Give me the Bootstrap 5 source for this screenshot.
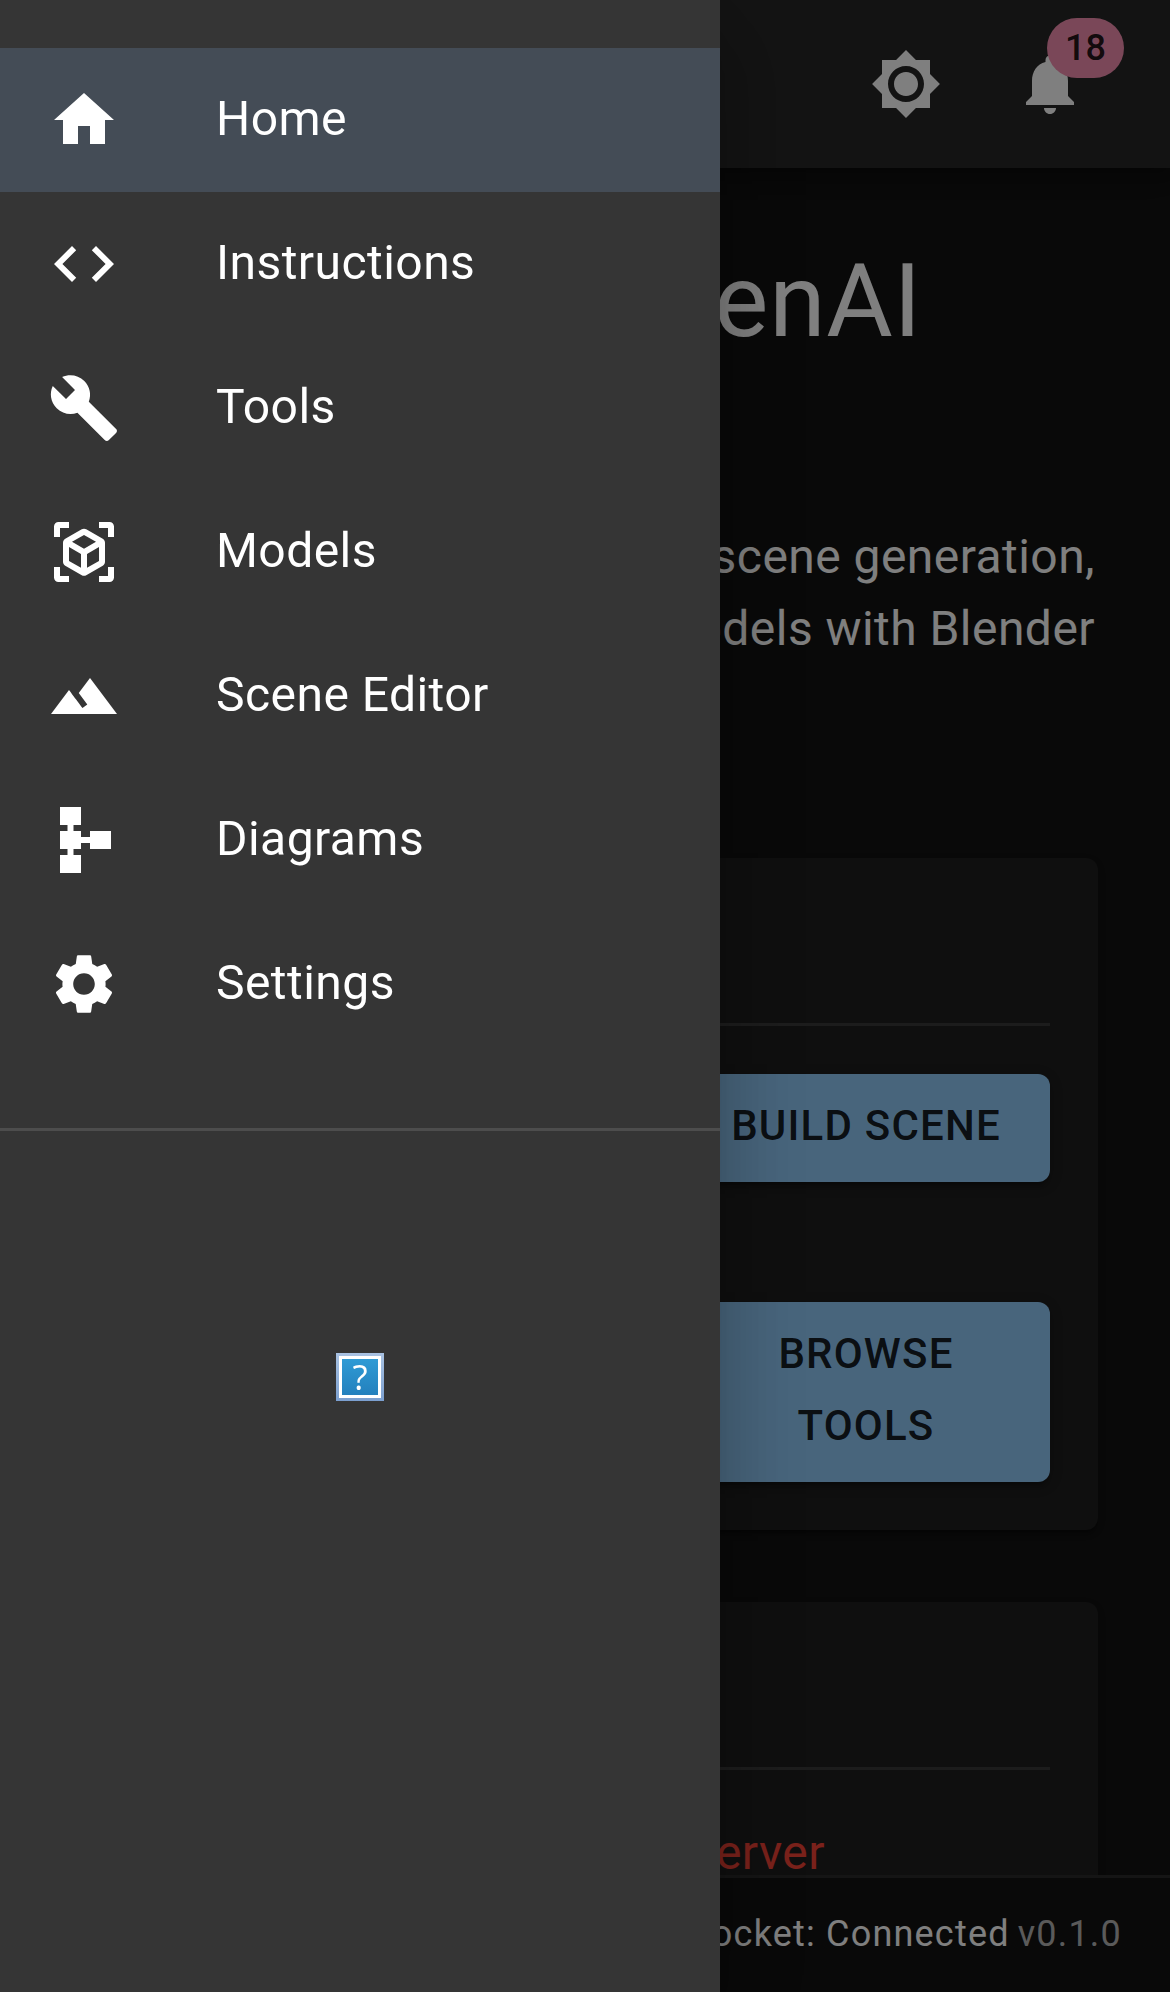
<!DOCTYPE html>
<html lang="en" data-bs-theme="dark">
<head>
<meta charset="utf-8">
<meta name="viewport" content="width=device-width, initial-scale=1">
<title>Home</title>
<link href="https://cdn.jsdelivr.net/npm/bootstrap@5.3.0/dist/css/bootstrap.min.css" rel="stylesheet">
<style>
  body { height: 1992px; background: #121212; color: #fff; font: 400 48px/72px Roboto, sans-serif; letter-spacing: .45px; }
  svg { width: 72px; height: 72px; fill: currentColor; flex: none; }
  .app-bar { height: 168px; padding: 0 48px; background: #272727;
    box-shadow: 0 6px 12px -3px rgba(0,0,0,.2), 0 12px 15px rgba(0,0,0,.14), 0 3px 30px rgba(0,0,0,.12); }
  .tool-btn { padding: 36px; line-height: 0; color: #fff; border: 0; }
  .count-pill { top: 18px; right: -2px; height: 60px; padding: 0 18px; border-radius: 30px; background: #f48fb1; color: rgba(0,0,0,.87); font: 500 36px/60px Roboto, sans-serif; letter-spacing: 0; }
  .page { padding: 70px 72px 0; }
  .page-title { font-size: 102px; line-height: 126px; letter-spacing: .75px; margin: 0 176px 157px 0; font-weight: 400; }
  .intro { margin: 0 3px 193px 0; }
  .panel { width: 100%; padding: 48px; border: 0; border-radius: 12px; background: #1e1e1e;
    box-shadow: 0 6px 3px -3px rgba(0,0,0,.2), 0 3px 3px rgba(0,0,0,.14), 0 3px 9px rgba(0,0,0,.12); }
  .panel hr { margin: 117px 0 48px; border-top: 3px solid #fff; opacity: .12; }
  .action { --bs-btn-color: rgba(0,0,0,.87); --bs-btn-bg: #90caf9; width: 368px; padding: 16px 46px 20px; border: 0; border-radius: 12px; font-size: 42px; font-weight: 500; line-height: 72px; letter-spacing: 1.2px;
    box-shadow: 0 9px 3px -6px rgba(0,0,0,.2), 0 6px 6px rgba(0,0,0,.14), 0 3px 15px rgba(0,0,0,.12); }
  .actions { gap: 120px; }
  .gap-panels { margin-top: 72px; }
  .alert-line { color: #f44336; margin: -1px 225px 0 0; }
  .status-bar { height: 117px; padding: 0 48px 2px; gap: 8px; background: #121212; border-top: 3px solid #2a2a2a; font-size: 36px; letter-spacing: 1.2px; }
  .muted { color: rgba(255,255,255,.7); }
  .offcanvas.drawer { width: 720px; padding-top: 48px; border: 0; background: #353535; color: #fff; --bs-offcanvas-width: 720px;
    box-shadow: 0 24px 30px -15px rgba(0,0,0,.2), 0 48px 72px 6px rgba(0,0,0,.14), 0 18px 90px 15px rgba(0,0,0,.12); }
  .drawer .nav-link { height: 144px; padding: 0 48px; gap: 96px; color: #fff; font-size: 48px; }
  .drawer .nav-link span { margin-top: -2px; }
  .drawer .nav-link.active { background: #444c56; }
  .drawer hr { margin: 72px 0 222px; border-top: 3px solid #4d4d4d; opacity: 1; }
  .missing { width: 48px; height: 48px; padding: 3px; background: linear-gradient(#a9c2e2, #7b9fcf); }
  .missing span { width: 42px; height: 42px; border: 3px solid #fff; background: linear-gradient(#2f9bd5, #2380bd); font: 500 35px/35px "Open Sans", sans-serif; letter-spacing: 0; }
</style>
</head>
<body class="overflow-hidden">
<header class="app-bar position-relative d-flex align-items-center justify-content-end">
  <button class="btn tool-btn" aria-label="Theme"><svg viewBox="0 0 24 24"><path d="M20 8.69V4h-4.69L12 .69 8.69 4H4v4.69L.69 12 4 15.31V20h4.69L12 23.31 15.31 20H20v-4.69L23.31 12 20 8.69zM12 18c-3.31 0-6-2.69-6-6s2.69-6 6-6 6 2.69 6 6-2.69 6-6 6zm0-10c-2.21 0-4 1.79-4 4s1.79 4 4 4 4-1.79 4-4-1.79-4-4-4z"/></svg></button>
  <button class="btn tool-btn" aria-label="Notifications"><svg viewBox="0 0 24 24"><path d="M12 22c1.1 0 2-.9 2-2h-4c0 1.1.89 2 2 2zm6-6v-5c0-3.07-1.64-5.64-4.5-6.32V4c0-.83-.67-1.5-1.5-1.5s-1.5.67-1.5 1.5v.68C7.63 5.36 6 7.92 6 11v5l-2 2v1h16v-1l-2-2z"/></svg></button>
  <span class="count-pill position-absolute me-5">18</span>
</header>

<main class="page">
  <h1 class="page-title text-end">OpenAI</h1>
  <p class="intro text-end">scene generation,<br>models with Blender</p>
  <section class="card panel">
    <hr>
    <div class="actions d-flex flex-column align-items-end">
      <button class="btn action">BUILD SCENE</button>
      <button class="btn action">BROWSE TOOLS</button>
    </div>
  </section>
  <section class="card panel gap-panels">
    <hr>
    <p class="alert-line text-end">Server</p>
  </section>
</main>

<footer class="status-bar fixed-bottom d-flex align-items-center justify-content-end">
  <span>Socket: Connected</span><span class="muted">v0.1.0</span>
</footer>

<div class="offcanvas-backdrop show"></div>
<aside class="offcanvas offcanvas-start show drawer" tabindex="-1" data-bs-backdrop="false">
  <nav class="nav flex-column">
    <a class="nav-link active d-flex align-items-center" href="#"><svg viewBox="0 0 24 24"><path d="M10 20v-6h4v6h5v-8h3L12 3 2 12h3v8z"/></svg><span>Home</span></a>
    <a class="nav-link d-flex align-items-center" href="#"><svg viewBox="0 0 24 24"><path d="M9.4 16.6 4.8 12l4.6-4.6L8 6l-6 6 6 6 1.4-1.4zm5.2 0 4.6-4.6-4.6-4.6L16 6l6 6-6 6-1.4-1.4z"/></svg><span>Instructions</span></a>
    <a class="nav-link d-flex align-items-center" href="#"><svg viewBox="0 0 24 24"><path d="m22.7 19-9.1-9.1c.9-2.3.4-5-1.5-6.9-2-2-5-2.4-7.4-1.3L9 6 6 9 1.6 4.7C.4 7.1.9 10.1 2.9 12.1c1.9 1.9 4.6 2.4 6.9 1.5l9.1 9.1c.4.4 1 .4 1.4 0l2.3-2.3c.5-.4.5-1.1.1-1.4z"/></svg><span>Tools</span></a>
    <a class="nav-link d-flex align-items-center" href="#"><svg viewBox="0 0 24 24"><path d="m18.25 7.6-5.5-3.18c-.46-.27-1.04-.27-1.5 0L5.75 7.6c-.46.27-.75.76-.75 1.3v6.35c0 .54.29 1.03.75 1.3l5.5 3.18c.46.27 1.04.27 1.5 0l5.5-3.18c.46-.27.75-.76.75-1.3V8.9c0-.54-.29-1.03-.75-1.3zM7 14.96v-4.62l4 2.32v4.61l-4-2.31zm5-4.03L8 8.61l4-2.31 4 2.31-4 2.32zm1 6.34v-4.61l4-2.32v4.62l-4 2.31zM7 2H3.5C2.67 2 2 2.67 2 3.5V7h2V4h3V2zm10 0h3.5c.83 0 1.5.67 1.5 1.5V7h-2V4h-3V2zM7 22H3.5c-.83 0-1.5-.67-1.5-1.5V17h2v3h3v2zm10 0h3.5c.83 0 1.5-.67 1.5-1.5V17h-2v3h-3v2z"/></svg><span>Models</span></a>
    <a class="nav-link d-flex align-items-center" href="#"><svg viewBox="0 0 24 24"><path d="m14 6-3.75 5 2.85 3.8-1.6 1.2C9.81 13.75 7 10 7 10l-6 8h22L14 6z"/></svg><span>Scene Editor</span></a>
    <a class="nav-link d-flex align-items-center" href="#"><svg viewBox="0 0 24 24"><path d="M14 9v2h-3V9H8.5V7H11V1H4v6h2.5v2H4v6h2.5v2H4v6h7v-6H8.5v-2H11v-2h3v2h7V9z"/></svg><span>Diagrams</span></a>
    <a class="nav-link d-flex align-items-center" href="#"><svg viewBox="0 0 24 24"><path d="M19.14 12.94c.04-.3.06-.61.06-.94 0-.32-.02-.64-.07-.94l2.03-1.58c.18-.14.23-.41.12-.61l-1.92-3.32c-.12-.22-.37-.29-.59-.22l-2.39.96c-.5-.38-1.03-.7-1.62-.94l-.36-2.54c-.04-.24-.24-.41-.48-.41h-3.84c-.24 0-.43.17-.47.41l-.36 2.54c-.59.24-1.13.57-1.62.94l-2.39-.96c-.22-.08-.47 0-.59.22L2.74 8.87c-.12.21-.08.47.12.61l2.03 1.58c-.05.3-.09.63-.09.94s.02.64.07.94l-2.03 1.58c-.18.14-.23.41-.12.61l1.92 3.32c.12.22.37.29.59.22l2.39-.96c.5.38 1.03.7 1.62.94l.36 2.54c.05.24.24.41.48.41h3.84c.24 0 .44-.17.47-.41l.36-2.54c.59-.24 1.13-.56 1.62-.94l2.39.96c.22.08.47 0 .59-.22l1.92-3.32c.12-.22.07-.47-.12-.61l-2.01-1.58zM12 15.6c-1.98 0-3.6-1.62-3.6-3.6s1.62-3.6 3.6-3.6 3.6 1.62 3.6 3.6-1.62 3.6-3.6 3.6z"/></svg><span>Settings</span></a>
  </nav>
  <hr>
  <div class="missing mx-auto"><span class="d-block text-center">?</span></div>
</aside>
<script src="https://cdn.jsdelivr.net/npm/bootstrap@5.3.0/dist/js/bootstrap.bundle.min.js"></script>
</body>
</html>
